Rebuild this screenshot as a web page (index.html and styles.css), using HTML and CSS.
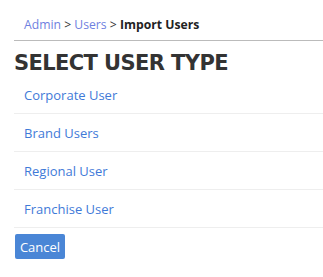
FILE: index.html
```
<!DOCTYPE html>
<html>
<head>
<meta charset="utf-8">
<link rel="stylesheet" href="styles.css">
</head>
<body>
<div class="page">
  <nav class="crumbs"><a class="crumb">Admin</a> &gt; <a class="crumb">Users</a> &gt; <b class="current">Import Users</b></nav>
  <h1 class="title">SELECT USER TYPE</h1>
  <ul class="types">
    <li class="type"><a>Corporate User</a></li>
    <li class="type"><a>Brand Users</a></li>
    <li class="type"><a>Regional User</a></li>
    <li class="type"><a>Franchise User</a></li>
  </ul>
  <button class="cancel">Cancel</button>
</div>
</body>
</html>
```
FILE: styles.css
```
html, body { margin: 0; padding: 0; background: #fff; }
body { font-family: "Open Sans", "Liberation Sans", sans-serif; }
.page { padding: 0 0 0 14px; }
.crumbs {
  font-size: 12.2px;
  color: #333;
  padding: 17px 0 0 10px;
  height: 23px;
  border-bottom: 1px solid #bbb;
  line-height: 16px;
}
.crumb { color: #6f7fe0; }
.current { font-weight: 700; color: #222; }
.title {
  font-family: "DejaVu Sans", sans-serif;
  font-weight: 700;
  font-size: 21px;
  color: #333;
  margin: 0;
  padding: 9px 0 0 0;
  line-height: 26px;
  letter-spacing: -0.6px;
}
.types { list-style: none; margin: 0; padding: 0; }
.type {
  height: 37px;
  border-bottom: 1px solid #eee;
  padding-left: 10px;
  display: flex;
  align-items: center;
  font-size: 13px;
}
.type a { color: #3f7ad8; }
.cancel {
  margin: 6px 0 0 1px;
  background: #4a86d6;
  color: #fff;
  border: none;
  border-radius: 2px;
  font-family: "Open Sans", sans-serif;
  font-size: 13px;
  width: 50px;
  height: 25px;
  padding: 0;
}
```
